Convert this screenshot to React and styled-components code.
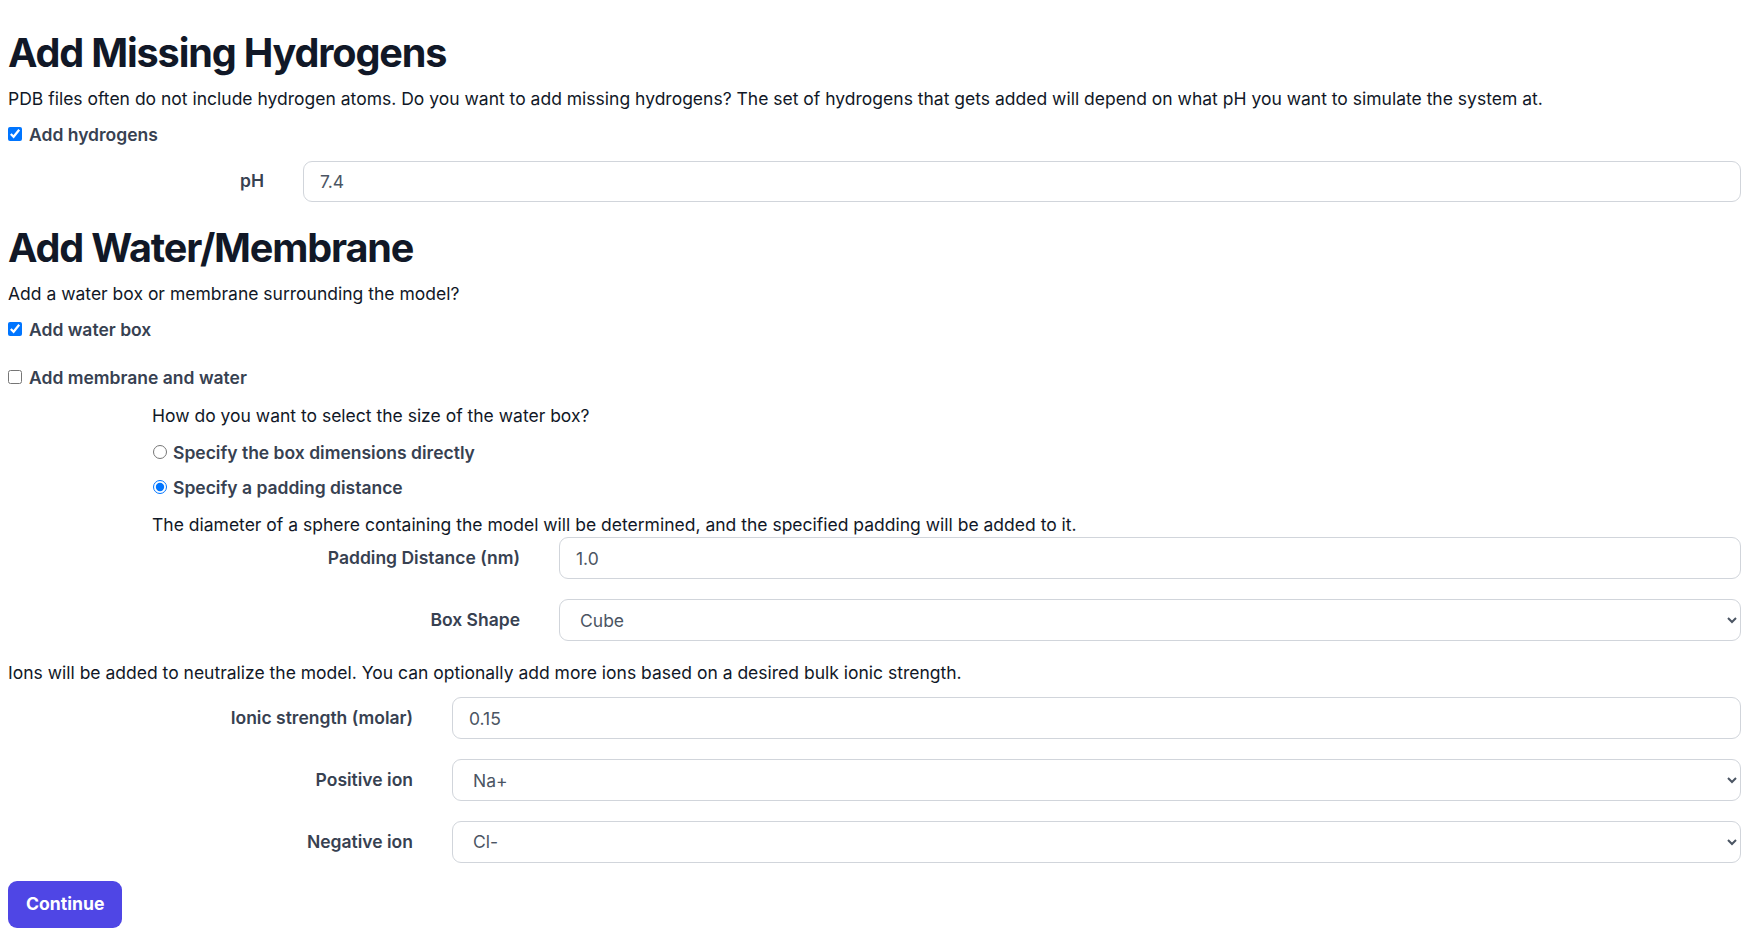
import React, { useState } from "react";
import styled, { createGlobalStyle } from "styled-components";

const GlobalStyle = createGlobalStyle`
  html {
    background: #ffffff;
    overflow: hidden;
  }
  body {
    margin: 8px;
    font-family: Inter, "Noto Sans", "Liberation Sans", sans-serif;
    font-size: 17.5px;
    line-height: 26.4px;
    color: #111827;
  }
  *, *::before, *::after {
    box-sizing: border-box;
  }
`;

const Page = styled.main`
  display: flex;
  flex-direction: column;
  padding-right: 7px;
`;

const SectionTitle = styled.h2`
  margin: ${(p) => p.$mt}px 0 0;
  font-size: 39.6px;
  line-height: 44px;
  letter-spacing: -1.15px;
  font-weight: 700;
  color: #111827;
`;

const Text = styled.p`
  margin: ${(p) => p.$mt}px 0 0;
  font-size: 17.5px;
  line-height: 26.4px;
  color: #111827;
`;

const OptionRow = styled.label`
  display: flex;
  align-items: flex-start;
  margin-top: ${(p) => p.$mt}px;
  font-size: 17.5px;
  line-height: 26.4px;
  font-weight: 600;
  color: #374151;
  cursor: pointer;
`;

const Check = styled.input.attrs({ type: "checkbox" })`
  width: 14px;
  height: 14px;
  margin: 5px 7px 0 0;
  flex: none;
`;

const Radio = styled.input.attrs({ type: "radio" })`
  width: 14px;
  height: 14px;
  margin: 5px 6px 0 1px;
  flex: none;
`;

const Indented = styled.div`
  display: flex;
  flex-direction: column;
  padding-left: 144px;
`;

const FieldRow = styled.div`
  display: grid;
  grid-template-columns: ${(p) => p.$labelWidth}px 1fr;
  column-gap: 39px;
  align-items: center;
  margin-top: ${(p) => p.$mt}px;
`;

const FieldLabel = styled.label`
  text-align: right;
  font-size: 17.5px;
  line-height: 26.4px;
  font-weight: 600;
  color: #374151;
`;

const fieldBase = `
  width: 100%;
  height: 41.8px;
  border: 1px solid #d1d5db;
  border-radius: 9px;
  background: #ffffff;
  font-family: Inter, "Noto Sans", "Liberation Sans", sans-serif;
  font-size: 17.5px;
  line-height: 26.4px;
  color: #4b5563;
  outline: none;
`;

const TextInput = styled.input.attrs({ type: "text" })`
  ${fieldBase}
  padding: 7px 16px;
`;

const SelectInput = styled.select`
  ${fieldBase}
  padding: 7px 8px 7px 16px;
`;

const ContinueButton = styled.button`
  align-self: flex-start;
  margin-top: ${(p) => p.$mt}px;
  padding: 10px 18px;
  border: none;
  border-radius: 9px;
  background: #4f46e5;
  color: #ffffff;
  font-family: Inter, "Noto Sans", "Liberation Sans", sans-serif;
  font-size: 17.6px;
  line-height: 26.4px;
  font-weight: 700;
  cursor: pointer;
`;

export default function App() {
  const [hydrogens, setHydrogens] = useState(true);
  const [water, setWater] = useState(true);
  const [membrane, setMembrane] = useState(false);
  const [sizeMode, setSizeMode] = useState("padding");
  const [ph, setPh] = useState("7.4");
  const [padding, setPadding] = useState("1.0");
  const [shape, setShape] = useState("cube");
  const [ionic, setIonic] = useState("0.15");
  const [posIon, setPosIon] = useState("Na+");
  const [negIon, setNegIon] = useState("Cl-");

  return (
    <>
      <GlobalStyle />
      <Page>
        <SectionTitle $mt={23.4}>Add Missing Hydrogens</SectionTitle>
        <Text $mt={11.1}>
          PDB files often do not include hydrogen atoms. Do you want to add missing hydrogens? The set of
          hydrogens that gets added will depend on what pH you want to simulate the system at.
        </Text>
        <OptionRow $mt={9.3}>
          <Check checked={hydrogens} onChange={(e) => setHydrogens(e.target.checked)} />
          Add hydrogens
        </OptionRow>
        <FieldRow $labelWidth={256} $mt={12.1}>
          <FieldLabel htmlFor="ph">pH</FieldLabel>
          <TextInput id="ph" value={ph} onChange={(e) => setPh(e.target.value)} />
        </FieldRow>

        <SectionTitle $mt={23.9}>Add Water/Membrane</SectionTitle>
        <Text $mt={11.1}>Add a water box or membrane surrounding the model?</Text>
        <OptionRow $mt={9.3}>
          <Check checked={water} onChange={(e) => setWater(e.target.checked)} />
          Add water box
        </OptionRow>
        <OptionRow $mt={21.2}>
          <Check checked={membrane} onChange={(e) => setMembrane(e.target.checked)} />
          Add membrane and water
        </OptionRow>

        <Indented>
          <Text $mt={11.9}>How do you want to select the size of the water box?</Text>
          <OptionRow $mt={10.2}>
            <Radio
              name="boxsize"
              checked={sizeMode === "dimensions"}
              onChange={() => setSizeMode("dimensions")}
            />
            Specify the box dimensions directly
          </OptionRow>
          <OptionRow $mt={9.3}>
            <Radio
              name="boxsize"
              checked={sizeMode === "padding"}
              onChange={() => setSizeMode("padding")}
            />
            Specify a padding distance
          </OptionRow>
          <Text $mt={10.3}>
            The diameter of a sphere containing the model will be determined, and the specified padding will be
            added to it.
          </Text>
          <FieldRow $labelWidth={368} $mt={-1}>
            <FieldLabel htmlFor="padding">Padding Distance (nm)</FieldLabel>
            <TextInput id="padding" value={padding} onChange={(e) => setPadding(e.target.value)} />
          </FieldRow>
          <FieldRow $labelWidth={368} $mt={20.2}>
            <FieldLabel htmlFor="shape">Box Shape</FieldLabel>
            <SelectInput id="shape" value={shape} onChange={(e) => setShape(e.target.value)}>
              <option value="cube">Cube</option>
              <option value="dodecahedron">Rhombic dodecahedron</option>
              <option value="octahedron">Truncated octahedron</option>
            </SelectInput>
          </FieldRow>
        </Indented>

        <Text $mt={18.6}>
          Ions will be added to neutralize the model. You can optionally add more ions based on a desired bulk
          ionic strength.
        </Text>
        <FieldRow $labelWidth={405} $mt={11.2}>
          <FieldLabel htmlFor="ionic">Ionic strength (molar)</FieldLabel>
          <TextInput id="ionic" value={ionic} onChange={(e) => setIonic(e.target.value)} />
        </FieldRow>
        <FieldRow $labelWidth={405} $mt={19.9}>
          <FieldLabel htmlFor="pos">Positive ion</FieldLabel>
          <SelectInput id="pos" value={posIon} onChange={(e) => setPosIon(e.target.value)}>
            <option>Cs+</option>
            <option>K+</option>
            <option>Li+</option>
            <option>Na+</option>
            <option>Rb+</option>
          </SelectInput>
        </FieldRow>
        <FieldRow $labelWidth={405} $mt={19.9}>
          <FieldLabel htmlFor="neg">Negative ion</FieldLabel>
          <SelectInput id="neg" value={negIon} onChange={(e) => setNegIon(e.target.value)}>
            <option>Cl-</option>
            <option>Br-</option>
            <option>F-</option>
            <option>I-</option>
          </SelectInput>
        </FieldRow>
        <ContinueButton $mt={18.5}>Continue</ContinueButton>
      </Page>
    </>
  );
}
